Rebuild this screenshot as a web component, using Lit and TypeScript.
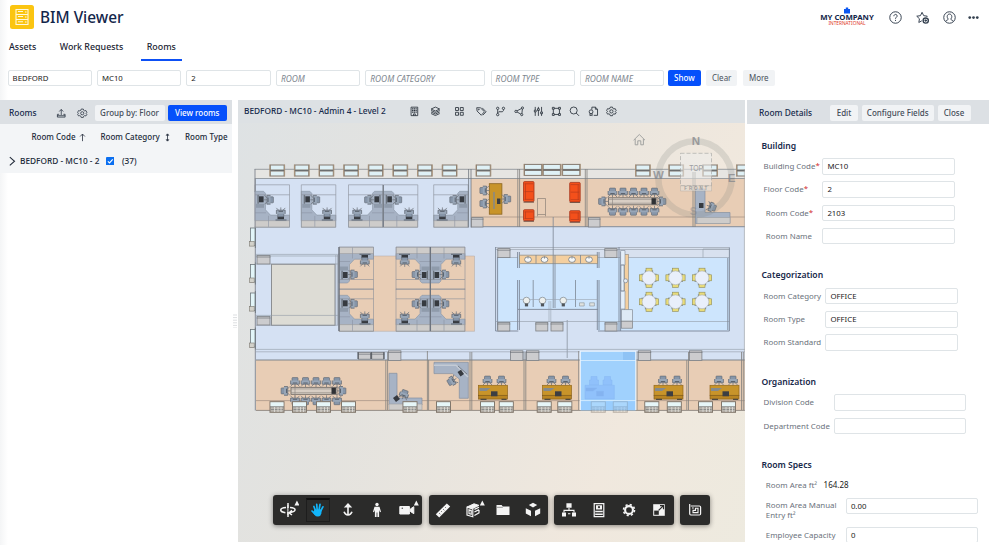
import { LitElement, html, svg, css } from "lit";
import { customElement } from "lit/decorators.js";
import { classMap } from "lit/directives/class-map.js";
import { styleMap } from "lit/directives/style-map.js";

/* ---------- furniture symbols ---------- */
const chair = (x: number, y: number, r = 0) => svg`
  <g transform="translate(${x} ${y}) rotate(${r})">
    <path d="M-4.5 4.5L0 0L4.5 4.5M0 0V5" stroke="#747a83" stroke-width=".8" fill="none"/>
    <rect x="-3" y="-4.4" width="6" height="4.6" rx=".6" fill="#8796a9" stroke="#5c636d" stroke-width=".6"/>
    <path d="M-4.4 -1.5V2.2H4.4V-1.5" fill="#98a6b7" stroke="#5c636d" stroke-width=".7"/>
    <path d="M-2.2 1H2.2" stroke="#4c535d" stroke-width=".8"/>
  </g>`;

const topWindow = (x: number, w = 14.5, y = 165) => svg`
  <rect x=${x} y=${y} width=${w} height="5" fill="#dff1f6" stroke="#83796f" stroke-width="1"/>
  <rect x=${x} y=${y + 6} width=${w} height="5" fill="#dff1f6" stroke="#83796f" stroke-width="1"/>
  <path d="M${x - 0.5} ${y - 0.5}V${y + 11.5}M${x + w + 0.5} ${y - 0.5}V${y + 11.5}" stroke="#a58e76" stroke-width=".9"/>
  <path d="M${x} ${y + 5.5}H${x + w}" stroke="#5f6468" stroke-width=".8"/>`;

const bottomWindow = (x: number) => svg`
  <rect x=${x} y="401.7" width="14" height="10.6" fill="#b9b5ae" stroke="#81776c" stroke-width="1"/>
  <rect x=${x + 0.5} y="402.3" width="13" height="4" fill="#e6f6f8"/>
  <path d="M${x} 406.8H${x + 14}M${x + 1} 409.5H${x + 13}" stroke="#777b7d" stroke-width=".7"/>
  <path d="M${x + 4.5} 407V412M${x + 8} 407V412M${x + 11} 407V412" stroke="#e1e1dd" stroke-width=".8"/>`;

const sideWindow = (y: number) => svg`
  <rect x="250.5" y=${y} width="4.6" height="17.5" fill="#e2f5f8" stroke="#6e757b" stroke-width=".8"/>
  <rect x="249.6" y=${y + 13.5} width="4.6" height="4.6" fill="#d2d1ca" stroke="#7c7870" stroke-width=".6"/>
  <path d="M255.4 ${y - 2}V${y + 20}" stroke="#747b83" stroke-width="1"/>`;

const door = (x: number, y: number, w = 12, h = 9.5) => svg`
  <rect x=${x} y=${y} width=${w} height=${h} fill="#ccccce" stroke="#7e8186" stroke-width=".8"/>
  <path d="M${x - 0.5} ${y + 1.6}H${x + w + 0.5}" stroke="#6f7378" stroke-width=".7"/>`;

/* Corner workstation in a 35x43 cell; mirrored with sx / sy. */
const cubicle = (x: number, y: number, sx = 1, sy = 1) => svg`
  <g transform="translate(${sx < 0 ? x + 34.5 : x} ${sy < 0 ? y + 42.5 : y}) scale(${sx} ${sy})">
    <path d="M0 6.5H8.5L10.5 8.5V25L15.5 30.3H34.5V36H0Z" fill="#a7b3c5" stroke="#8995a5" stroke-width=".6"/>
    <rect x=".3" y="36" width="34" height="6.3" fill="#ceccca" stroke="#a3a2a3" stroke-width=".6"/>
    <path d="M13.5 31V42M0 28H11" stroke="#8b94a2" stroke-width=".6"/>
    <rect x="4" y="11.5" width="4.6" height="6" fill="#363a40"/>
    <rect x="2.4" y="10" width="1.4" height="9" fill="#6c747e"/>
    <rect x="1" y="19" width="8" height="4" fill="#8f9bab"/>
    <rect x="22.5" y="31.5" width="6.5" height="3" fill="#363a40"/>
    <rect x="20.5" y="34.6" width="11" height="1.2" fill="#68717d"/>
    ${chair(14, 15, 90)}
    ${chair(25.8, 27.6, 180)}
    <path d="M0 0H34.5V42.5H0ZM0 10H34.5" fill="none" stroke="#8a8f98" stroke-width=".6"/>
  </g>`;

const woodDesk = (x: number) => svg`
  ${chair(x + 9, 380.5)}${chair(x + 23, 380.5)}
  <rect x=${x} y="385.3" width="29" height="10" fill="#c8942a" stroke="#93681a" stroke-width=".7"/>
  <rect x=${x} y="395.3" width="29" height="3.8" fill="#b98522" stroke="#7b5818" stroke-width=".6"/>
  <path d="M${x + 1} 388H${x + 12}L${x + 8} 391H${x + 1}Z" fill="#858a8d"/>
  <rect x=${x + 12.5} y="391.3" width="6.5" height="5" fill="#3c3e42"/>
  <path d="M${x + 2} 399.4H${x + 8}M${x + 23} 399.4H${x + 28}" stroke="#4e4a43" stroke-width="1.4"/>`;

const meetingTable = (x: number, y: number, w: number, gap: number) => svg`
  ${[0, 1, 2, 3, 4].map((i) => svg`${chair(x + 4 + i * gap, y - 5.3)}${chair(x + 4 + i * gap, y + 13, 180)}`)}
  ${chair(x - 5.5, y + 3.6, 270)}${chair(x + w + 4.5, y + 3.6, 90)}
  <rect x=${x} y=${y} width=${w} height="7" fill="#d8cec4" stroke="#67635f" stroke-width=".8"/>
  <path d="M${x} ${y + 1.6}H${x + w}M${x} ${y + 5.4}H${x + w}M${x + 4} ${y - 2}V${y + 10}" stroke="#8b857f" stroke-width=".6"/>
  <rect x=${x + w - 5.5} y=${y + 0.4} width="4.4" height="6.2" fill="#2f3135"/>`;

const roundTable = (x: number, y: number) => svg`
  <g transform="translate(${x} ${y})">
    ${[0, 90, 180, 270].map((a) => svg`<g transform="rotate(${a})">
      <rect x="-3" y="-9.6" width="6" height="5" fill="#e9dc79" stroke="#8d8a59" stroke-width=".6"/>
      <path d="M-3.6 -7.5V-4.6M3.6 -7.5V-4.6" stroke="#6d6f60" stroke-width=".7"/></g>`)}
    <circle r="6.9" fill="#e9effb" stroke="#a9b0ba" stroke-width=".6"/>
  </g>`;

const sofa = (x: number, y: number, h: number, side: number) => svg`
  <rect x=${x} y=${y} width="10.5" height=${h} rx="1" fill="#f4501b" stroke="#a5341a" stroke-width=".8"/>
  <path d="M${x + (side > 0 ? 2 : 8.5)} ${y + 2}V${y + h - 2}M${x + 1} ${y + 2.2}H${x + 9.5}M${x + 1} ${y + h - 2.2}H${x + 9.5}" stroke="#b63b1c" stroke-width=".7"/>
  ${h > 15 ? svg`<path d="M${x + 1} ${y + h / 2}H${x + 9.5}" stroke="#b63b1c" stroke-width=".7"/>` : ""}
  <path d="M${x} ${y + h + 0.6}H${x + 10.5}" stroke="#5f4339" stroke-width=".8"/>`;

const basin = (x: number) => svg`
  <ellipse cx=${x} cy="259.6" rx="3.4" ry="2.8" fill="#f4f6f7" stroke="#73797e" stroke-width=".8"/>
  <path d="M${x} 256.5V258.6" stroke="#73797e" stroke-width=".8"/>`;

const toilet = (x: number) => svg`
  <circle cx=${x} cy="300.5" r="3.3" fill="#edf0ee" stroke="#8a9297" stroke-width=".8"/>
  <rect x=${x - 1.6} y="303.4" width="3.2" height="3" fill="#51565a"/>`;

/* ---------- floor plan ---------- */
const floorPlan = svg`
  <path d="M255 169.3H745V178.5H255Z" fill="#e6e5e2"/>
  <path d="M255 178.5H745V360H255Z" fill="#d5e1f3"/>
  <path d="M471 178.5H745V227H471Z" fill="#e8cdb5"/>
  <path d="M256 360H745V410.5H256Z" fill="#e8cdb5"/>
  <path d="M339 256H474.5V331.3H339Z" fill="#e8cdb5" stroke="#b0a7a3" stroke-width=".5"/>
  <path d="M254.6 169.3H745M255 178.5H745" stroke="#858b91" stroke-width=".8" fill="none"/>
  <path d="M255 169V192M255.3 178V410.5" stroke="#888d95" stroke-width="1" fill="none"/>
  ${[270.3, 294.9, 319.5, 344.2, 368.8, 393.4, 418, 442.7, 476.5, 636, 669.3, 703.2, 737].map((x) => topWindow(x, 13.8))}
  ${[524.5, 543.2, 562.6].map((x) => topWindow(x, 17.2, 164.4))}
  ${[228, 264.5, 293, 329.5].map(sideWindow)}

  ${cubicle(255, 184.8)}${cubicle(301.3, 184.8)}${cubicle(348.5, 184.8, -1)}${cubicle(383.3, 184.8)}${cubicle(433.7, 184.8, -1)}
  <path d="M383.3 185V227" stroke="#777d87" stroke-width="1.2"/>
  <path d="M468.6 169V227.5M471 169V227.5" stroke="#6f757d" stroke-width=".8"/>

  <path d="M255 254.4H339M255 264H338M255 256H338" stroke="#929aa6" stroke-width=".6"/>
  <rect x="271.5" y="264.3" width="63.5" height="61" fill="#dddcd5" stroke="#8b8e91" stroke-width="1"/>
  <path d="M256 315.4H338M256 325.3H338M335.8 255V325M337.5 255V325" stroke="#929aa6" stroke-width=".6"/>
  ${door(257, 255.4, 13, 8.6)}${door(257, 316.4, 13, 8.6)}

  <path d="M339 247H373.5V256H339ZM396 247H465V256H396Z" fill="#d9e2f0"/>
  ${cubicle(339, 247, 1, -1)}${cubicle(339, 288.8)}
  ${cubicle(396, 247, -1, -1)}${cubicle(396, 288.8, -1)}
  ${cubicle(430.5, 247, 1, -1)}${cubicle(430.5, 288.8)}
  <path d="M430.3 247V331M339 247V331" stroke="#6b727c" stroke-width="1.3"/>

  <path d="M471 217H745" stroke="#a28f82" stroke-width=".7"/>
  <path d="M471 226.6H745" stroke="#969aa2" stroke-width="1.3"/>
  <path d="M517.8 169V227M519.6 169V227M585.3 169V227M587 169V227M693 172V227M695 172V227" stroke="#81807e" stroke-width=".8"/>
  <rect x="489.3" y="183.7" width="12.6" height="30.5" fill="#c8942a" stroke="#8b6421" stroke-width=".8"/>
  <path d="M494 192V209" stroke="#818890" stroke-width="1.4"/>
  <rect x="497" y="198.5" width="3.4" height="5.5" fill="#3c3e42"/>
  ${chair(484.3, 190.5, 270)}${chair(484.3, 203.5, 270)}${chair(506.3, 199, 90)}
  ${sofa(523.5, 181.6, 20, 1)}${sofa(523.5, 209.7, 11, 1)}${sofa(569.7, 182.4, 19.5, -1)}${sofa(569.7, 210.7, 11, -1)}
  <path d="M537.5 198.5H545.5V214.5H537.5ZM537.5 214.5V216.3M545.5 214.5V216.3" fill="none" stroke="#7c746d" stroke-width=".6"/>
  ${meetingTable(608.5, 197.8, 48.5, 10.5)}
  ${door(588.5, 217.6, 11.5, 9.4)}${door(471.5, 217.6, 11.5, 9.4)}
  <path d="M695.5 189H705V212.5H730V223.5H695.5Z" fill="#a7b3c5" stroke="#8590a1" stroke-width=".7"/>
  <path d="M697 217.5H730V223.5H697Z" fill="#ceccca" stroke="#9b9da1" stroke-width=".6"/>
  <rect x="699" y="203" width="4.5" height="5" fill="#363a40"/>
  ${chair(711.5, 207, 110)}

  <path d="M495.5 247H729.5V257.5H495.5Z" fill="#d8e1ef"/>
  <path d="M497 257.5H518.5V330H497ZM518.5 255H598V309.5H518.5ZM598 257.5H729V330.5H598Z" fill="#cde5fd"/>
  <path d="M518.5 309.5H598V331H518.5Z" fill="#d5e1f3"/>
  <path d="M495.5 247.5H729.5M495.5 249.5H729.5M497 257.5H518M598 257.5H729M496 321.5H729.5" fill="none" stroke="#929aa6" stroke-width=".6"/>
  <path d="M495.6 247V331H518.3M598 331H729.4V247.5M497.6 257V330M517.6 252V268M519.4 252V268M517.6 280V330M519.4 280V330M597.3 252V268M599 252V268M597.3 280V330M599 280V330M619 247V331M620.6 252V331M727.8 258V330M518 309.4H598" fill="none" stroke="#7c8797" stroke-width=".9"/>
  <path d="M703 257.5V249H729" fill="none" stroke="#929aa6" stroke-width=".6"/>
  <path d="M519.5 255.2H597.5V263.6H519.5Z" fill="#f4cf9f" stroke="#8d8679" stroke-width=".7"/>
  <path d="M536 255V263.6M580.5 255V263.6M553.2 217V308M555 255V308M533.2 280V307M575.5 280V307" stroke="#7c8693" stroke-width=".8"/>
  <path d="M519 299.5H598M549 301V322M550.8 301V322" stroke="#98a3b0" stroke-width=".6"/>
  ${[528, 544.5, 572, 589].map(basin)}
  ${[526.5, 542.5, 563.3].map(toilet)}
  <path d="M579.5 302.8H584.2V306H579.5ZM589.7 302.8H594.4V306H589.7Z" fill="#dfe2e0" stroke="#8a9297" stroke-width=".6"/>
  ${[497.8, 604.8].map((x) => door(x, 248.6, 12.2, 9))}
  ${[497.8, 535.8, 551, 605].map((x) => door(x, 322.4, 12, 8.6))}
  <rect x="624.4" y="254.5" width="4" height="56" fill="#f4cf9f" stroke="#8d8679" stroke-width=".6"/>
  <path d="M620.6 250.5H625V265H620.6ZM621 265H624V291H621ZM620.6 291H625V309H620.6Z" fill="#e4effa" stroke="#7c8797" stroke-width=".6"/>
  <circle cx="625.6" cy="280.8" r="2" fill="#e8eef4" stroke="#7c8797" stroke-width=".7"/>
  <rect x="621.6" y="309.7" width="11" height="11.5" fill="#deeaf5" stroke="#858d97" stroke-width=".7"/>
  <rect x="621.6" y="321.2" width="11" height="7" fill="#ccccce" stroke="#7e8186" stroke-width=".7"/>
  ${[649, 675.5, 702].map((x) => svg`${roundTable(x, 277.8)}${roundTable(x, 301.8)}`)}

  <path d="M256 349.4H745M256 351.8H745" stroke="#929aa6" stroke-width=".6"/>
  <path d="M256 360H745" stroke="#7f858c" stroke-width="1"/>
  <path d="M567.2 320V358" stroke="#98a3b0" stroke-width="1"/>
  <path d="M256 400.6H745" stroke="#a28f82" stroke-width=".7"/>
  <path d="M256 410.4H745" stroke="#8b857f" stroke-width=".9"/>
  <path d="M385.8 360V410M387.6 352V410M427.4 351V410M428.6 360V410M470 352V410M471.8 352V410M524 352V410M525.8 352V410M578.7 351V410M637 352V410M686.8 360V410M688.5 352V410M741.5 352V410M743.3 352V410" stroke="#81807e" stroke-width=".8"/>
  ${door(358.5, 352.6, 12, 6.6)}${door(371.8, 352.6, 12, 6.6)}
  <path d="M358 352V359M371.2 352V359M384 352V359" stroke="#44494f" stroke-width="1"/>
  ${[388.5, 510.5, 526.5, 638.3, 689.5].map((x) => door(x, 350.8, 12.4, 9.6))}
  ${meetingTable(291, 387.3, 46, 10.5)}
  <path d="M389 373.3H397V398H422V405H389Z" fill="#a7b3c5" stroke="#8590a1" stroke-width=".7"/>
  <path d="M389 404H422V409.8H389Z" fill="#ceccca" stroke="#9b9da1" stroke-width=".6"/>
  <path d="M393 398L397 395L400 399L396 402Z" fill="#363a40"/>
  ${chair(404, 394.5, 20)}
  <path d="M434 362.3H468.3V398.3H459.3V379L452.5 373.6H434Z" fill="#a7b3c5" stroke="#8590a1" stroke-width=".7"/>
  <path d="M434 365.3H456L468 377" fill="none" stroke="#c4cbd5" stroke-width="1.4"/>
  <path d="M457.5 372L461 369.7L464 374L460.5 376.5Z" fill="#363a40"/>
  <path d="M458 366L467 374" stroke="#7a828d" stroke-width="1"/>
  ${chair(452, 381, 240)}
  ${[478.5, 542.5, 654, 710].map(woodDesk)}
  ${[270, 292.5, 316.5, 341.5, 403, 436.5, 480.5, 499.3, 537.2, 557.8, 644.8, 667.3, 698.5, 721.5].map(bottomWindow)}
  <rect x="580.3" y="351.3" width="55.5" height="59" fill="#a0d1fd"/>
  <g fill="#90c1fb" stroke="#86b7f2" stroke-width=".5">
    <path d="M591 376.5H597V380H598.5V385H589.5V380H591ZM604.5 376.5H610.5V380H612V385H603V380H604.5Z"/>
    <path d="M585 385.3H614.3V399H585Z"/>
    <path d="M586 388H597L593 391H586ZM596.5 391.3H603.5V396H596.5Z" fill="#84b3f0"/>
  </g>
  <rect x="623" y="352" width="12.5" height="8" fill="#8fc3f5"/>
  <g opacity=".45">${bottomWindow(591.3)}${bottomWindow(613.3)}</g>
  <rect x="580.8" y="401" width="54.5" height="9.4" fill="#8fc8ff" opacity=".4"/>
  <path d="M580.3 360.5H635.8M580.3 400.6H635.8" stroke="#d7ecfe" stroke-width=".9"/>
  <path d="M580.3 410V351.3H635.8V410" fill="none" stroke="#eaf5ff" stroke-width="1.1"/>
  <path d="M744.4 169V411" stroke="#a8a6a3" stroke-width=".6"/>

  <circle cx="695" cy="178" r="36.7" fill="none" stroke="#858985" stroke-opacity=".22" stroke-width="6.5"/>
  <rect x="680.5" y="153.3" width="31" height="32.4" fill="#ededeb" fill-opacity=".55" stroke="#9b9c9b" stroke-opacity=".7" stroke-width=".8" stroke-dasharray="4 2"/>
  <path d="M680.5 185.7H711.5V191H680.5Z" fill="#e6e2de" fill-opacity=".6" stroke="#9b9c9b" stroke-opacity=".5" stroke-width=".6"/>
  <g class="compass">
    <text x="696" y="145.3" font-size="11.5">N</text><text x="658.5" y="179" font-size="11.5">W</text>
    <text x="731.6" y="182" font-size="11.5">E</text><text x="693.3" y="215" font-size="11" opacity=".6">S</text>
    <text x="696.2" y="171.3" font-size="8.6" font-weight="400" textLength="14" lengthAdjust="spacingAndGlyphs">TOP</text>
    <text x="695.8" y="190" font-size="4.5" textLength="23">FRONT</text>
  </g>
  <path d="M633.6 140.2L639.3 134.5L645 140.2M635.2 139V144.8H637.8V140.8H640.8V144.8H643.4V139" fill="none" stroke="#9a9c9b" stroke-width=".9"/>
`;

/* ---------- icons, drawn in a 12x12 box ---------- */
const ICONS: Record<string, unknown> = {
  upload: svg`<path d="M6 8V1.8M3.7 4L6 1.6L8.3 4M3.6 7.2H1.6V10.4H10.4V7.2H8.4M1.6 8.8H10.4"/>`,
  gear: svg`<path d="M4.8 1.2H7.2L7.6 2.6L8.8 3.3L10.2 2.9L11.3 5L10.3 6L11.3 7.2L10.2 9.1L8.8 8.7L7.6 9.4L7.2 10.8H4.8L4.4 9.4L3.2 8.7L1.8 9.1L.7 7.2L1.7 6L.7 5L1.8 2.9L3.2 3.3L4.4 2.6Z"/><circle cx="6" cy="6" r="1.8"/>`,
  building: svg`<path d="M2.3 1.3H9.7V10.7H2.3Z"/><path d="M4.1 2.6V7.6M6 2.6V7.6M7.9 2.6V7.6" stroke-width="1.4" stroke-dasharray="1.3 .6"/><path d="M5 10.7V8.8H7V10.7"/>`,
  layers: svg`<path d="M6 1.2L10.8 3.4L6 5.6L1.2 3.4ZM1.2 5L6 7.2L10.8 5M1.2 6.7L6 8.9L10.8 6.7M1.2 8.4L6 10.6L10.8 8.4"/>`,
  grid: svg`<path d="M1.7 1.7H5V5H1.7ZM7 1.7H10.3V5H7ZM1.7 7H5V10.3H1.7ZM7 7H10.3V10.3H7Z"/>`,
  tag: svg`<path d="M.8 1.9L1.2 5.6L5.9 10.3L9.4 6.4L4.9 2ZM6.8 2L11.2 6.4L7.6 10.2"/><circle cx="3.1" cy="4" r=".5"/>`,
  branch: svg`<circle cx="3" cy="2.6" r="1.3"/><circle cx="3" cy="9.6" r="1.3"/><circle cx="9.4" cy="2.6" r="1.3"/><path d="M3 4V8.3M9.4 4V5L8.3 6.4H4.2L3 7.6"/>`,
  nodes: svg`<circle cx="2.2" cy="6" r="1.3"/><circle cx="9.4" cy="2.2" r="1.2"/><circle cx="8.6" cy="9.6" r="1.2"/><path d="M3.4 5.4L8.3 2.8M3.3 6.6L7.6 9M9.3 3.4L8.8 8.4"/>`,
  sliders: svg`<path d="M2.5 1V4.4M2.5 6.6V11M6 1V3M6 5V11M9.5 1V6.4M9.5 8.6V11M1.5 4.6H3.5V6.6H1.5ZM5 3H7V5H5ZM8.5 6.6H10.5V8.6H8.5Z"/>`,
  frame: svg`<path d="M2.6 3.6V8.4M9.4 3.6V8.4M3.6 2.6H8.4M3.6 9.4H8.4M1.5 1.5H3.6V3.6H1.5ZM8.4 1.5H10.5V3.6H8.4ZM1.5 8.4H3.6V10.5H1.5ZM8.4 8.4H10.5V10.5H8.4Z"/>`,
  search: svg`<circle cx="5.2" cy="5" r="3.9"/><path d="M8 7.8L11.2 11"/>`,
  docs: svg`<path d="M4.3 4V1.3H8.2L10.6 3.6V10.4H6.4M8.2 1.3V3.6H10.6"/><circle cx="3.4" cy="6.4" r="2.1"/><path d="M2.2 8.2V10.8L3.4 9.9L4.6 10.8V8.2"/>`,
  help: svg`<circle cx="6" cy="6" r="5.3"/><path d="M4.5 4.8C4.5 2.6 7.5 2.6 7.5 4.6C7.5 5.8 6 5.8 6 7.2M6 8.2V9.2"/>`,
  star: svg`<path d="M5.4 9L2.6 10.6L3.2 7.2L.7 4.8L4.1 4.3L5.6 1.2L7.1 4.3L10.4 4.8L9.8 5.5"/><circle cx="9" cy="8.8" r="2.4" stroke-width="1.3"/><path d="M9 7.6V10M7.8 8.8H10.2"/>`,
  user: svg`<circle cx="6" cy="6" r="5.3"/><path d="M2.6 9.6C3 8.2 4.6 8.3 4.9 7.6C3 5.5 4 2.8 6 2.8C8 2.8 9 5.5 7.1 7.6C7.4 8.3 9 8.2 9.4 9.6"/>`,
  more: svg`<g fill="currentColor" stroke="none"><circle cx="1.9" cy="6" r="1.5"/><circle cx="6" cy="6" r="1.5"/><circle cx="10.1" cy="6" r="1.5"/></g>`,
  up: svg`<path d="M6 10V2.4M3.4 4.9L6 2.2L8.6 4.9"/>`,
  sort: svg`<path d="M6 2.2V9.8M4.6 3.6L6 2L7.4 3.6ZM4.6 8.4L6 10L7.4 8.4Z"/>`,
  chevron: svg`<path d="M3.2 1.2L8.6 6L3.2 10.8" stroke-width="1.2"/>`,
};
const icon = (name: string, size = 10.5, stroke = 0.85) =>
  html`<svg class="icon ${name}" viewBox="0 0 12 12" width=${size} height=${size} stroke-width=${stroke}>${ICONS[name]}</svg>`;

/* Viewer toolbar glyphs, drawn in a 16x16 box */
const TOOLS: Record<string, unknown> = {
  orbit: svg`<path d="M8 1V6M8 10V15" stroke-width="1.5"/><path d="M5.4 10.8C-1.2 9.6 -.6 6 6 5.6M10 5.5C16.6 6 17 9.4 9.5 10.8M12 8.4L9 10.9L12 13" stroke-width="1.5" fill="none"/><path d="M7.9 3V13" stroke-width="1"/>`,
  hand: svg`<path fill="none" stroke-width="1.7" stroke-linecap="round" d="M5.6 9L3.9 4.5M7.2 8L6.7 2.4M9 8L10 2.4M10.7 9L12.9 4.8M5 12L2 9"/><path fill="currentColor" stroke="none" d="M4.7 7.6H11.6L11.4 11.6Q10.8 14.4 8.2 14.6Q5.8 14.8 4.6 13L2.8 10.6Z"/>`,
  dolly: svg`<path d="M8 4V12.5M5.6 4.8L8 2.2L10.4 4.8ZM4 9.8Q5.2 12.8 8 13Q10.8 12.8 12 9.8" stroke-width="1.6" fill="none"/>`,
  person: svg`<g fill="currentColor" stroke="none"><circle cx="8" cy="2.5" r="1.7"/><path d="M5.5 4.7H10.5L12 9.7L11 10.2L10.1 8V15H8.4V10.6H7.6V15H5.9V8L5 10.2L4 9.7Z"/></g>`,
  camera: svg`<path d="M.8 4.5H10.4V12H.8Z" fill="currentColor"/><path d="M11.3 7L14.8 4.7V11.7L11.3 9.4Z" fill="currentColor"/><circle cx="3.3" cy="6.3" r=".8" fill="#555" stroke="none"/>`,
  ruler: svg`<path d="M.8 12.3L11.8 1.4L15.2 4.5L4.2 15.4Z" fill="currentColor" stroke="none"/><path d="M4 11L5.4 12.4M6 9L7 10M8 7L9.4 8.4M10 5L11 6" stroke="#555" stroke-width=".7"/>`,
  section: svg`<path d="M2 5L9 1.8L14 3.4L8 6.3Z" fill="currentColor"/><path d="M2 5.2V13L7.8 14.8V7ZM4 7.8V11.6L6.2 12.3V8.5ZM9.4 7.4L14 5.2M9.4 10L14 7.6M9.4 13.4L14 10.8V8" fill="none" stroke-width="1.2"/>`,
  folder: svg`<path d="M1.5 3H6.6L7.8 4.6H14.5V13H1.5Z" fill="currentColor" stroke="none"/><path d="M2 5.3H7.8" stroke="#555" stroke-width=".6"/>`,
  explode: svg`<g fill="currentColor" stroke="none"><path d="M8 .8L12.2 3.1L8 5.4L3.8 3.1Z"/><path d="M.8 6.3L6 8.8V14.2L.8 11.4ZM15.2 6.3L10 8.8V14.2L15.2 11.4Z"/></g>`,
  tree: svg`<g fill="currentColor" stroke="none"><path d="M5.4 1.2H10.6V5.8H5.4ZM1 10.6H5V14.4H1ZM11 10.6H15V14.4H11Z"/></g><path d="M8 6V8.2M3 10.4V8.4H13V10.4M7 11.8H9.4" fill="none" stroke-width="1.1"/>`,
  props: svg`<path d="M3.2 1.6H12.8V14.6H3.2Z" fill="none" stroke-width="1.2"/><path d="M5 3.2H11V7.4H5ZM4.2 8.8H11.8V10.2H4.2ZM4.2 11.6H11.8V13H4.2Z" fill="currentColor" stroke="none"/><circle cx="8" cy="5.2" r="1.1" fill="#333" stroke="none"/>`,
  settings: svg`<circle cx="8" cy="8" r="3.9" fill="none" stroke-width="2.1"/><circle cx="8" cy="8" r="5.5" fill="none" stroke-width="1.6" stroke-dasharray="2.16 2.16"/>`,
  full: svg`<path d="M2.2 2.2H13.8V13.8H2.2Z" fill="currentColor" stroke="none"/><path d="M9 3.6H12.5V7.2M12.2 3.8L7.6 8.4" stroke="#2b2b2a" stroke-width="1.2" fill="none"/><path d="M3.2 8.6H7.8V12.8H3.2Z" fill="#2b2b2a" stroke="none"/>`,
  minimap: svg`<path d="M3.8 4H12.4Q13.6 4 13.6 5.2V11.8Q13.6 13 12.4 13H3.8Q2.7 13 2.7 11.8V2" fill="none" stroke-width="1.2"/><path d="M6 10.6V8.4H8.5V6.2H11V10.6ZM5 6H6.8" fill="none" stroke-width="1.1"/>`,
};

interface Tool { name: string; menu?: boolean; active?: boolean; }
const TOOL_GROUPS: Tool[][] = [
  [{ name: "orbit", menu: true }, { name: "hand", active: true }, { name: "dolly" }, { name: "person" }, { name: "camera", menu: true }],
  [{ name: "ruler" }, { name: "section", menu: true }, { name: "folder" }, { name: "explode" }],
  [{ name: "tree" }, { name: "props" }, { name: "settings" }, { name: "full" }],
  [{ name: "minimap" }],
];

interface Field { label: string; value?: string; required?: boolean; indent?: boolean; plain?: boolean; tall?: boolean; }
interface Section { title: string; labelWidth: number; fields: Field[]; }
const SECTIONS: Section[] = [
  { title: "Building", labelWidth: 61, fields: [
    { label: "Building Code", value: "MC10", required: true },
    { label: "Floor Code", value: "2", required: true },
    { label: "Room Code", value: "2103", required: true, indent: true },
    { label: "Room Name", indent: true }] },
  { title: "Categorization", labelWidth: 64, fields: [
    { label: "Room Category", value: "OFFICE" }, { label: "Room Type", value: "OFFICE" }, { label: "Room Standard" }] },
  { title: "Organization", labelWidth: 72.5, fields: [{ label: "Division Code" }, { label: "Department Code" }] },
  { title: "Room Specs", labelWidth: 84.5, fields: [
    { label: "Room Area ft²", value: "164.28", plain: true, indent: true },
    { label: "Room Area Manual Entry ft²", value: "0.00", indent: true, tall: true },
    { label: "Employee Capacity", value: "0", indent: true }] },
];

const FILTERS = [
  { text: "BEDFORD", w: 84, filled: true }, { text: "MC10", w: 84, filled: true }, { text: "2", w: 84.5, filled: true },
  { text: "ROOM", w: 84 }, { text: "ROOM CATEGORY", w: 120 }, { text: "ROOM TYPE", w: 84 }, { text: "ROOM NAME", w: 84 },
];

const VIEWER_ICONS: [string, number][] = [["building", 19.6], ["layers", 21.5], ["grid", 26.5], ["tag", 17.5], ["branch", 21.5], ["nodes", 16.3], ["sliders", 22], ["frame", 14], ["search", 21.5], ["docs", 17], ["gear", 18]];

@customElement("app-root")
export class AppRoot extends LitElement {
  static styles = css`
    :host { display: block; width: 1000px; height: 545px; overflow: hidden; background: linear-gradient(90deg, #f4f5f6, #fff 8px); font: 8px/12px "Noto Sans", sans-serif; color: #222b3a; }
    * { box-sizing: border-box; }
    .icon { fill: none; stroke: currentColor; flex: none; display: block; }
    .header { display: flex; height: 36px; padding: 5px 21px 0 9.5px; align-items: flex-start; }
    .logo { display: block; width: 24px; height: 24px; }
    .title { margin: 0 auto 0 6.5px; font-size: 15.4px; line-height: 25.6px; font-weight: 500; color: #13264a; white-space: nowrap; }
    .company { width: 54px; display: flex; flex-direction: column; align-items: center; margin: 2px 15px 0 0; white-space: nowrap; }
    .company svg { display: block; }
    .company-name { font-size: 7.8px; line-height: 8px; font-weight: 700; color: #13264a; margin-top: -.6px; }
    .company-sub { font-size: 4.8px; line-height: 5px; color: #e0392b; }
    .actions { display: flex; gap: 14px; padding-top: 5.5px; color: #34404f; }
    .actions .more { margin: 1px 0 0 -2px; }
    .tabs { display: flex; height: 25px; padding-left: 1.5px; }
    .tab { padding: 5px 6px 0 7.5px; font-size: 8.9px; font-weight: 500; height: 24.5px; color: #1b2533; white-space: nowrap; }
    .tab.second { margin-left: 10px; } .tab.active { margin-left: 11.5px; padding: 5px 6px 0; border-bottom: 2px solid #0d50f5; }
    .filters { display: flex; gap: 5.3px; padding: 9px 0 0 7.6px; height: 39px; }
    .box { flex: none; height: 16.4px; border: 1px solid #dfe4e7; border-radius: 2px; background: #fff; padding: 0 4px; line-height: 15.4px; font-size: 7.8px; color: #222; white-space: nowrap; }
    .box.empty { font-style: italic; font-size: 8.4px; color: #7d858e; }
    .btn { flex: none; height: 16px; border-radius: 2px; background: #f1f3f5; color: #4b525c; font-size: 8px; line-height: 16px; text-align: center; white-space: nowrap; }
    .btn.primary { background: #0550fb; color: #fff; font-weight: 500; }
    .btn.strong { font-weight: 500; color: #454d59; }
    .show { width: 32.5px; margin-left: -1px; } .clear { width: 31.5px; } .btn.more { width: 32px; }
    .main { display: flex; height: 441.5px; }
    .list { width: 232px; }
    .bar { display: flex; align-items: center; height: 24px; background: #dce0e4; padding-top: 1.5px; }
    .bar-title { font-size: 8.4px; font-weight: 500; color: #172b4c; white-space: nowrap; }
    .list .bar { padding-left: 9px; }
    .list .bar-title { width: 46.5px; } .list .bar .upload { margin-right: 11px; } .list .bar .gear { margin-right: 7px; }
    .group { width: 70px; margin-right: 3.5px; } .view { width: 58.5px; }
    .rows { background: #f3f5f7; height: 48.5px; font-weight: 500; }
    .cols { display: flex; align-items: center; height: 26px; padding-left: 31.5px; white-space: nowrap; }
    .c1 { width: 45.5px; } .c2 { width: 61px; } .cols .icon { margin-right: 12.5px; }
    .row { display: flex; align-items: center; height: 22.5px; padding-left: 7px; white-space: nowrap; font-size: 8.3px; }
    .row-name { margin-left: 2.5px; width: 85.5px; }
    .check { width: 8.4px; height: 8.4px; margin-right: 8px; }
    .split { width: 6px; display: flex; align-items: center; justify-content: center; }
    .viewer { position: relative; width: 507px; background: linear-gradient(112deg, rgba(222,226,228,1) 0%, rgba(226,226,223,.9) 32%, rgba(240,232,221,.3) 75%, rgba(235,236,224,.5) 100%), #f0e8de; overflow: hidden; }
    .plan { position: absolute; inset: 0; display: block; }
    .compass { font-weight: 700; text-anchor: middle; fill: #83858a; fill-opacity: .75; font-family: "Liberation Sans", sans-serif; }
    .viewer-bar { position: relative; display: flex; align-items: center; height: 22.5px; background: #dde1e4; padding-left: 6px; color: #2a323c; }
    .viewer-bar .bar-title { width: 160.8px; font-size: 8.3px; }
    .ic { flex: none; display: flex; justify-content: center; }
    .tools { position: absolute; left: 35px; bottom: 16.5px; display: flex; gap: 6.3px; }
    .tool-group { display: flex; height: 30px; background: #2b2b2a; border-radius: 3px; box-shadow: 0 1px 5px rgba(0,0,0,.45); color: #f4f4f4; }
    .tool { position: relative; width: 29.85px; display: flex; align-items: center; justify-content: center; }
    .tool svg { display: block; stroke: currentColor; }
    .tool.active { color: #12b5fa; }
    .tool.active::before { content: ""; position: absolute; inset: 3px; border: 1px solid #1d1d1d; border-top: 2px solid #101010; }
    .caret { position: absolute; right: 3.4px; top: 5.4px; width: 5px; height: 5.2px; background: #f4f4f4; clip-path: polygon(50% 0, 100% 100%, 0 100%); }
    .details { margin-left: 2px; width: 242px; overflow: hidden; }
    .details .bar { padding-left: 12px; gap: 3.5px; }
    .details .bar-title { width: 67.5px; }
    .edit { width: 28px; } .conf { width: 72.5px; } .close { width: 33px; }
    .section { padding: 15.6px 0 0 14.4px; }
    .section + .section { padding-top: 17.9px; }
    .section-title { font-size: 8.6px; line-height: 12px; font-weight: 600; color: #17294a; margin-bottom: 6.6px; }
    .field { display: flex; height: 23.3px; padding-left: 2.2px; color: #6b727c; }
    .field.plain { height: 20.4px; } .field.tall { height: 29px; }
    .label { flex: none; padding-top: 2px; line-height: 12px; font-size: 7.9px; white-space: nowrap; }
    .label.indent { padding-left: 2.2px; }
    .tall .label { white-space: normal; line-height: 10.6px; padding-right: 8px; }
    .field .box { width: 132.5px; font-size: 7.8px; }
    .plain-value { padding: 2px 0 0 14px; color: #222; }
    .req { color: #d12c2c; position: relative; top: -1px; }
  `;

  private renderField(f: Field, w: number) {
    return html`<div class=${classMap({ field: true, plain: !!f.plain, tall: !!f.tall })}>
      <div class=${classMap({ label: true, indent: !!f.indent })} style=${styleMap({ width: `${f.plain ? 46 : w - 2.2}px` })}>${f.label}${f.required ? html`<span class="req">*</span>` : ""}</div>
      ${f.plain ? html`<div class="plain-value">${f.value}</div>` : html`<div class="box">${f.value ?? ""}</div>`}
    </div>`;
  }

  render() {
    return html`
      <header class="header">
        <svg class="logo" viewBox="0 0 24 24"><rect width="24" height="24" rx="2.5" fill="#fbc511"/>
          <path d="M6 4.5H18V19.5H6ZM6 9.5H18M6 14.5H18M8 6.5H13M8 11.5H13M8 16.8H13M15 7H16.5M15 12H16.5M15 17H16.5" fill="none" stroke="#fff8dc" stroke-width="1.1"/></svg>
        <div class="title">BIM Viewer</div>
        <div class="company">
          <svg width="8" height="7" viewBox="0 0 8 7"><path d="M1 2H2.8V.6H5.2V2H7V6.6H1Z" fill="#0d57f0"/></svg>
          <div class="company-name">MY COMPANY</div><div class="company-sub">INTERNATIONAL</div>
        </div>
        <div class="actions">${icon("help", 13, 0.9)}${icon("star", 13, 0.9)}${icon("user", 13, 0.9)}${icon("more", 11)}</div>
      </header>
      <nav class="tabs"><div class="tab">Assets</div><div class="tab second">Work Requests</div><div class="tab active">Rooms</div></nav>
      <div class="filters">
        ${FILTERS.map((f) => html`<div class=${classMap({ box: true, empty: !f.filled })} style=${styleMap({ width: `${f.w}px` })}>${f.text}</div>`)}
        <div class="btn primary show">Show</div><div class="btn clear">Clear</div><div class="btn more">More</div>
      </div>
      <main class="main">
        <section class="list">
          <div class="bar"><div class="bar-title">Rooms</div>${icon("upload")}${icon("gear")}
            <div class="btn strong group">Group by: Floor</div><div class="btn primary view">View rooms</div></div>
          <div class="rows">
            <div class="cols"><span class="c1">Room Code</span>${icon("up", 11)}<span class="c2">Room Category</span>${icon("sort", 11)}<span>Room Type</span></div>
            <div class="row">${icon("chevron", 10.5)}<span class="row-name">BEDFORD - MC10 - 2</span>
              <svg class="check" viewBox="0 0 9 9"><rect width="9" height="9" rx="1" fill="#0b6ff0"/><path d="M2 4.6L3.8 6.4L7.2 2.6" fill="none" stroke="#fff" stroke-width="1.2"/></svg>
              <span>(37)</span></div>
          </div>
        </section>
        <div class="split"><svg width="4" height="14" viewBox="0 0 4 14"><path d="M1 .5V14M3 .5V14" stroke="#b9bdc2" stroke-width="1" stroke-dasharray="1 1.6"/></svg></div>
        <section class="viewer">
          <svg class="plan" width="507" height="441.5" viewBox="238 100 507 441.5">${floorPlan}</svg>
          <div class="viewer-bar"><div class="bar-title">BEDFORD - MC10 - Admin 4 - Level 2</div>
            ${VIEWER_ICONS.map(([n, w]) => html`<div class="ic" style=${styleMap({ width: `${w}px` })}>${icon(n, 10.8, 0.95)}</div>`)}</div>
          <div class="tools">${TOOL_GROUPS.map((g) => html`<div class="tool-group">${g.map((t) => html`
            <div class=${classMap({ tool: true, active: !!t.active })}><svg width="16" height="16" viewBox="0 0 16 16">${TOOLS[t.name]}</svg>${t.menu ? html`<i class="caret"></i>` : ""}</div>`)}</div>`)}</div>
        </section>
        <section class="details">
          <div class="bar"><div class="bar-title">Room Details</div><div class="btn strong edit">Edit</div><div class="btn strong conf">Configure Fields</div><div class="btn strong close">Close</div></div>
          ${SECTIONS.map((s) => html`<div class="section"><div class="section-title">${s.title}</div>${s.fields.map((f) => this.renderField(f, s.labelWidth))}</div>`)}
        </section>
      </main>`;
  }
}
